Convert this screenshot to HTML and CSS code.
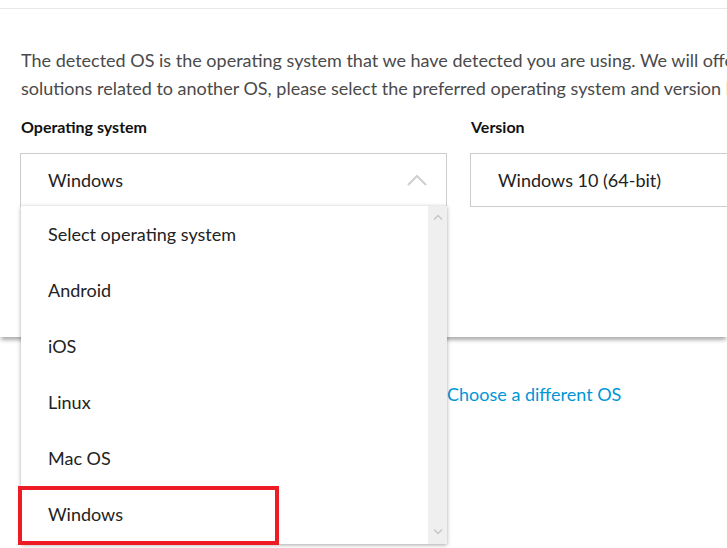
FILE: index.html
```html
<!DOCTYPE html>
<html>
<head>
<meta charset="utf-8">
<link rel="stylesheet" href="styles.css">
</head>
<body>
<div class="page">
  <div class="card">
    <p class="intro">The detected OS is the operating system that we have detected you are using. We will offer<br>solutions related to another OS, please select the preferred operating system and version below.</p>
    <div class="fields">
      <div class="field">
        <div class="label">Operating system</div>
        <div class="select">
          <span>Windows</span>
          <svg class="chev" width="20" height="12" viewBox="0 0 20 12"><path d="M1 11 L10 2 L19 11" fill="none" stroke="#cfcfcf" stroke-width="2"/></svg>
        </div>
        <div class="menu">
          <ul class="options">
            <li>Select operating system</li>
            <li>Android</li>
            <li>iOS</li>
            <li>Linux</li>
            <li>Mac OS</li>
            <li>Windows</li>
          </ul>
          <div class="scrollbar">
            <svg width="10" height="6" viewBox="0 0 10 6"><path d="M1 5.5 L5 1.5 L9 5.5" fill="none" stroke="#c4c4c4" stroke-width="1.3"/></svg>
            <svg width="10" height="6" viewBox="0 0 10 6"><path d="M1 0.5 L5 4.5 L9 0.5" fill="none" stroke="#c4c4c4" stroke-width="1.3"/></svg>
          </div>
          <div class="highlight"></div>
        </div>
      </div>
      <div class="field">
        <div class="label">Version</div>
        <div class="select"><span>Windows 10 (64-bit)</span></div>
      </div>
    </div>
  </div>
  <div class="below">
    <a class="link" href="#">Choose a different OS</a>
  </div>
</div>
</body>
</html>
```

FILE: styles.css
```css
html, body {
  margin: 0;
  padding: 0;
  background: #fff;
  overflow: hidden;
  width: 727px;
  height: 548px;
}
body {
  font-family: Lato, "Open Sans", sans-serif;
  color: #222;
}
.page {
  padding-top: 8px;
}
.card {
  border-top: 1px solid #e8e8e8;
  height: 329px;
  padding: 37px 0 0 21px;
  box-sizing: border-box;
  background: #fff;
  box-shadow: 0 4px 4px -1px rgba(0,0,0,0.33);
  position: relative;
  z-index: 1;
}
.intro {
  margin: 0;
  font-size: 18px;
  line-height: 28px;
  color: #4a4a4a;
  white-space: nowrap;
}
.fields {
  display: grid;
  grid-template-columns: 427px 427px;
  column-gap: 23px;
  margin-top: 13px;
  margin-left: -1px;
}
.field {
  position: relative;
}
.label {
  font-size: 16px;
  font-weight: 700;
  color: #111;
  line-height: 24px;
  padding-left: 1px;
  margin-bottom: 14px;
}
.select {
  height: 54px;
  border: 1px solid #cccccc;
  box-sizing: border-box;
  display: flex;
  align-items: center;
  justify-content: space-between;
  padding: 0 19px 0 27px;
  font-size: 18px;
  color: #222;
}
.chev {
  display: block;
}
.menu {
  position: absolute;
  left: 1px;
  top: 91px;
  width: 426px;
  height: 338px;
  background: #fff;
  box-shadow: 0 1px 4px rgba(0,0,0,0.35);
  display: flex;
  z-index: 5;
}
.options {
  list-style: none;
  margin: 0;
  padding: 0;
  flex: 1;
}
.options li {
  height: 56px;
  display: flex;
  align-items: center;
  padding-left: 27px;
  font-size: 18px;
  color: #222;
}
.scrollbar {
  width: 19px;
  background: #efefef;
  display: flex;
  flex-direction: column;
  justify-content: space-between;
  align-items: center;
  padding: 8px 0 9px;
  box-sizing: border-box;
}
.scrollbar svg {
  display: block;
}
.highlight {
  position: absolute;
  left: -3px;
  top: 280px;
  width: 261px;
  height: 59px;
  border: 4px solid #ed1c24;
  box-sizing: border-box;
}
.below {
  padding: 45px 0 0 447px;
}
.link {
  font-size: 18px;
  color: #0096d6;
  text-decoration: none;
  line-height: 24px;
}
```
